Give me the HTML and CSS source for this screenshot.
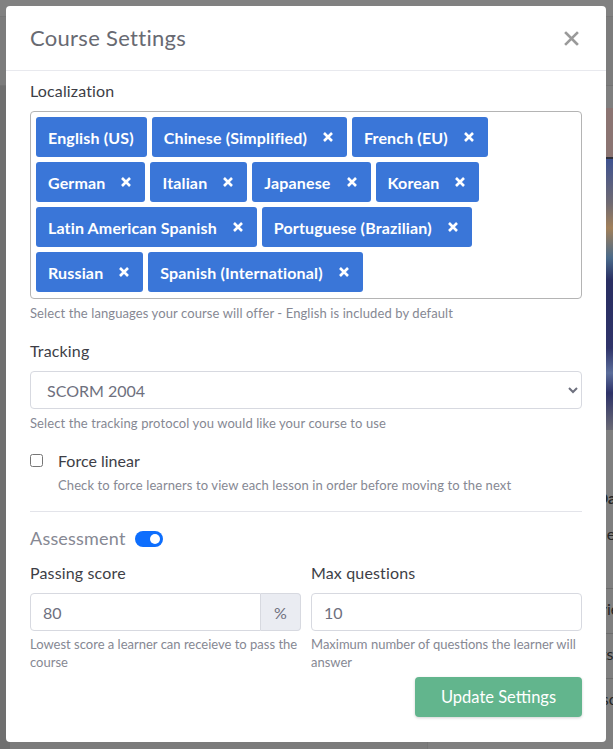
FILE: index.html
```html
<!DOCTYPE html>
<html lang="en">
<head>
    <meta charset="UTF-8">
    <meta name="viewport" content="width=device-width, initial-scale=1.0">
    <title>Course Settings</title>
    <link rel="stylesheet" href="styles.css">
</head>
<body>

    <!-- page behind the modal -->
    <div class="page">
        <div class="topbar"></div>
        <div class="toolbar"></div>
        <div class="page-body">
            <div class="side"></div>
            <div class="main"></div>
            <aside class="panel">
                <div class="panel-img"></div>
                <p class="panel-title">Data</p>
                <p class="panel-text">Learner</p>
                <ul class="panel-list">
                    <li class="item-series">Series</li>
                    <li class="item-tests">Tests</li>
                    <li class="item-disc">Disc</li>
                </ul>
            </aside>
        </div>
    </div>

    <div class="modal">
        <div class="modal-header">
            <h5 class="modal-title">Course Settings</h5>
            <button class="close-btn" aria-label="Close">
                <svg width="15" height="15" viewBox="0 0 15 15"><path d="M2 2 L13 13 M13 2 L2 13" stroke="currentColor" stroke-width="2.6" stroke-linecap="square"/></svg>
            </button>
        </div>

        <div class="modal-body">
            <div class="form-group">
                <label class="form-label">Localization</label>
                <div class="tag-box">
                    <span class="tag">English (US)</span>
                    <span class="tag">Chinese (Simplified) <svg class="tag-x" viewBox="0 0 12 12"><path d="M2 2 L10 10 M10 2 L2 10"/></svg></span>
                    <span class="tag">French (EU) <svg class="tag-x" viewBox="0 0 12 12"><path d="M2 2 L10 10 M10 2 L2 10"/></svg></span>
                    <span class="tag">German <svg class="tag-x" viewBox="0 0 12 12"><path d="M2 2 L10 10 M10 2 L2 10"/></svg></span>
                    <span class="tag">Italian <svg class="tag-x" viewBox="0 0 12 12"><path d="M2 2 L10 10 M10 2 L2 10"/></svg></span>
                    <span class="tag">Japanese <svg class="tag-x" viewBox="0 0 12 12"><path d="M2 2 L10 10 M10 2 L2 10"/></svg></span>
                    <span class="tag">Korean <svg class="tag-x" viewBox="0 0 12 12"><path d="M2 2 L10 10 M10 2 L2 10"/></svg></span>
                    <span class="tag">Latin American Spanish <svg class="tag-x" viewBox="0 0 12 12"><path d="M2 2 L10 10 M10 2 L2 10"/></svg></span>
                    <span class="tag">Portuguese (Brazilian) <svg class="tag-x" viewBox="0 0 12 12"><path d="M2 2 L10 10 M10 2 L2 10"/></svg></span>
                    <span class="tag">Russian <svg class="tag-x" viewBox="0 0 12 12"><path d="M2 2 L10 10 M10 2 L2 10"/></svg></span>
                    <span class="tag">Spanish (International) <svg class="tag-x" viewBox="0 0 12 12"><path d="M2 2 L10 10 M10 2 L2 10"/></svg></span>
                </div>
                <small class="help">Select the languages your course will offer - English is included by default</small>
            </div>

            <div class="form-group">
                <label class="form-label" for="tracking">Tracking</label>
                <select class="form-select" id="tracking">
                    <option>SCORM 2004</option>
                    <option>SCORM 1.2</option>
                    <option>xAPI</option>
                </select>
                <small class="help">Select the tracking protocol you would like your course to use</small>
            </div>

            <div class="form-check">
                <input type="checkbox" class="check-input" id="forceLinear">
                <label class="check-label" for="forceLinear">Force linear</label>
                <small class="help">Check to force learners to view each lesson in order before moving to the next</small>
            </div>

            <hr class="divider">

            <div class="assessment">
                <span>Assessment</span>
                <span class="switch"><span class="switch-knob"></span></span>
            </div>

            <div class="form-row">
                <div class="col">
                    <label class="form-label">Passing score</label>
                    <div class="input-group">
                        <input type="text" class="form-input" value="80">
                        <span class="input-addon">%</span>
                    </div>
                    <small class="help">Lowest score a learner can receieve to pass the course</small>
                </div>
                <div class="col">
                    <label class="form-label">Max questions</label>
                    <input type="text" class="form-input" value="10">
                    <small class="help">Maximum number of questions the learner will answer</small>
                </div>
            </div>

            <div class="modal-actions">
                <button class="btn-update">Update Settings</button>
            </div>
        </div>
    </div>

</body>
</html>
```

FILE: styles.css
```css
body {
    margin: 0;
    background: #7f7f7f;
    font-family: Lato, "Open Sans", sans-serif;
    color: #3d3e46;
}

/* page behind (already dimmed by the backdrop) */
.page {
    height: 749px;
    overflow: hidden;
}

.topbar {
    height: 16px;
    background: #818181;
    border-bottom: 1px solid #767676;
}

.toolbar {
    height: 68px;
    background: #7c7c7c;
    border-bottom: 1px solid #737373;
}

.page-body {
    display: flex;
    height: 664px;
}

.side {
    width: 10px;
    background: #6f6f6f;
}

.main {
    flex: 1;
    background: #7b7b7b;
}

.panel {
    width: 185px;
    padding: 22px 0 0;
    background: #7f7f7f;
    border-left: 1px solid #757575;
    white-space: nowrap;
    color: #262626;
    font-size: 16px;
    line-height: 24px;
}

.panel-img {
    height: 322px;
    background: linear-gradient(#8b7472 0, #8b7472 49px, #2f2f3a 49px, #2f2f3a 51px, #3f5290 51px, #6f6a72 95px, #a1805a 120px, #4a6a8a 150px, #2a2f63 172px, #2a2f63 190px, #30346a 240px, #5b6d9a 265px, #2e3268 285px, #6a6a74 322px);
}

.panel-title {
    margin: 56px 0 0 168px;
    font-weight: 700;
}

.panel-text {
    margin: 12px 0 0 140px;
}

.panel-list {
    list-style: none;
    margin: 42px 0 0;
    padding: 0;
}

.panel-list li {
    border-top: 1px solid #6c6c6c;
    padding: 8px 0 12px;
}

.item-series { padding-left: 156px !important; }
.item-tests { padding-left: 150px !important; }
.item-disc { padding-left: 158px !important; }

/* modal */
.modal {
    position: fixed;
    top: 6px;
    left: 6px;
    width: 600px;
    height: 736px;
    background: #fff;
    border-radius: 4px;
    box-sizing: border-box;
}

.modal-header {
    display: flex;
    justify-content: space-between;
    align-items: center;
    padding: 17px 24px;
    border-bottom: 1px solid #e8e9ee;
}

.modal-title {
    margin: 0;
    font-size: 22px;
    font-weight: 400;
    letter-spacing: 0.3px;
    line-height: 30px;
    color: #686a72;
}

.close-btn {
    background: none;
    border: none;
    padding: 0;
    margin-right: 3px;
    color: #9a9a9a;
    display: flex;
    cursor: pointer;
}

.modal-body {
    padding: 8px 24px 24px;
}

.form-group {
    margin-bottom: 16px;
}

.form-label {
    display: block;
    font-size: 16px;
    letter-spacing: 0.15px;
    line-height: 24px;
    margin-bottom: 8px;
    color: #3d3e46;
}

.tag-box {
    display: flex;
    flex-wrap: wrap;
    gap: 5px;
    padding: 5px 5px 6px;
    border: 1px solid #b4b4b4;
    border-radius: 4px;
}

.tag {
    display: inline-flex;
    align-items: center;
    gap: 15px;
    height: 40px;
    padding: 0 13px 0 12px;
    box-sizing: border-box;
    background: #3a76d8;
    color: #fff;
    font-weight: 700;
    font-size: 16px;
    letter-spacing: 0.15px;
    border-radius: 3px;
}

.tag-x {
    width: 12px;
    height: 12px;
    stroke: #fff;
    stroke-width: 2.6;
}

.help {
    display: block;
    margin-top: 4px;
    font-size: 13px;
    letter-spacing: 0.1px;
    line-height: 20px;
    color: #868893;
}

.form-select {
    display: block;
    width: 100%;
    height: 38px;
    padding: 0 8px 0 12px;
    font-family: inherit;
    font-size: 16px;
    color: #6e707e;
    background: #fff;
    border: 1px solid #d7d9e0;
    border-radius: 4px;
}

.form-check {
    position: relative;
    padding-left: 28px;
    margin-bottom: 16px;
}

.check-input {
    position: absolute;
    left: 0;
    top: 5px;
    width: 13px;
    height: 13px;
    margin: 0;
}

.check-label {
    display: block;
    font-size: 16px;
    line-height: 24px;
}

.form-check .help {
    margin-top: 2px;
}

.divider {
    margin: 0 0 13px;
    border: 0;
    border-top: 1px solid #e3e4ea;
}

.assessment {
    display: flex;
    align-items: center;
    gap: 9px;
    font-size: 18px;
    letter-spacing: 0.2px;
    line-height: 27px;
    color: #868893;
    margin-bottom: 9px;
}

.switch {
    position: relative;
    width: 28px;
    height: 16px;
    border-radius: 8px;
    background: #0d6efd;
}

.switch-knob {
    position: absolute;
    top: 3px;
    right: 3px;
    width: 10px;
    height: 10px;
    border-radius: 50%;
    background: #fff;
}

.form-row {
    display: grid;
    grid-template-columns: 1fr 1fr;
    gap: 10px;
}

.form-row .help {
    line-height: 18px;
    letter-spacing: 0;
}

.input-group {
    display: flex;
}

.form-input {
    display: block;
    width: 100%;
    height: 38px;
    box-sizing: border-box;
    padding: 0 12px;
    font-family: inherit;
    font-size: 16px;
    color: #6e707e;
    border: 1px solid #d7d9e0;
    border-radius: 4px;
}

.input-group .form-input {
    border-radius: 4px 0 0 4px;
}

.input-addon {
    display: flex;
    align-items: center;
    justify-content: center;
    width: 40px;
    flex: none;
    box-sizing: border-box;
    background: #eaecf2;
    border: 1px solid #d7d9e0;
    border-left: 0;
    border-radius: 0 4px 4px 0;
    color: #6e707e;
    font-size: 16px;
}

.modal-actions {
    display: flex;
    justify-content: flex-end;
    margin-top: 6px;
}

.btn-update {
    width: 167px;
    height: 40px;
    background: #62b58d;
    color: #fff;
    font-family: inherit;
    font-size: 16.5px;
    border: none;
    border-radius: 4px;
    box-shadow: 0 1px 3px rgba(0, 0, 0, 0.18);
    cursor: pointer;
}
```
